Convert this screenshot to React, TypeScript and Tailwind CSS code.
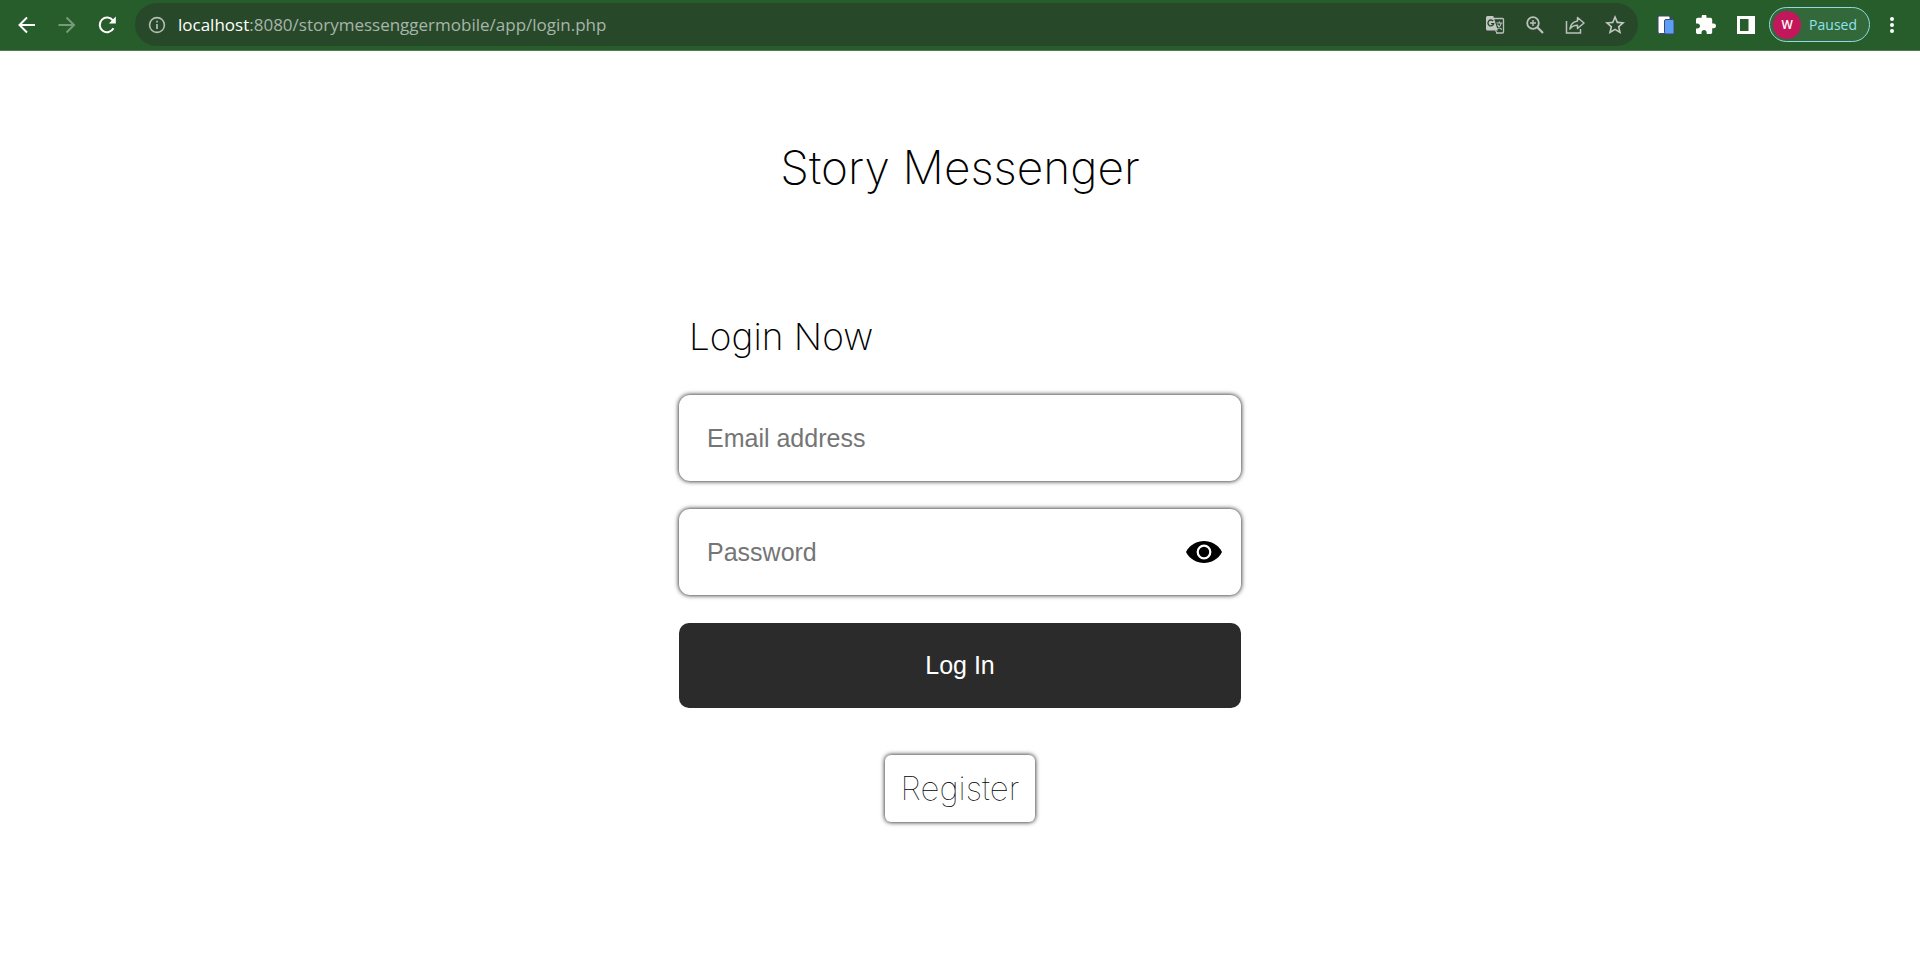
import { useState, type ReactNode } from 'react';

type IconButtonProps = { label: string; className?: string; children: ReactNode };

function IconButton({ label, className = '', children }: IconButtonProps) {
  return (
    <button type="button" aria-label={label} className={`flex size-10 shrink-0 items-center justify-center ${className}`}>
      {children}
    </button>
  );
}

function BrowserBar() {
  return (
    <header className="flex items-center border-b border-[#4d7d50] bg-[#275d2b] pt-[3px] pb-1 pr-2 pl-[7px] font-['Open_Sans',sans-serif]">
      <nav aria-label="History" className="flex">
        <IconButton label="Back">
          <svg width="20" height="20" viewBox="0 0 20 20" fill="none" stroke="#fff" strokeWidth="2">
            <path d="M18 10H3M10 2.500 2.500 10l7.500 7.500" />
          </svg>
        </IconButton>
        <IconButton label="Forward">
          <svg width="20" height="20" viewBox="0 0 20 20" fill="none" stroke="#769b78" strokeWidth="2">
            <path d="M1.500 10h15.500M9.500 2.500 17 10l-7.500 7.500" />
          </svg>
        </IconButton>
        <IconButton label="Reload">
          <svg width="20" height="20" viewBox="0 0 20 20" fill="none">
            <path d="M16.500 13.300A7.300 7.300 0 1 1 16 5.600" stroke="#fff" strokeWidth="2" />
            <path d="M18.800 1.500v6.900h-6.900z" fill="#fff" />
          </svg>
        </IconButton>
      </nav>
      <div className="ml-2 flex h-[43px] min-w-0 flex-1 items-center rounded-full bg-[#27492a] pl-[13px] pr-[3px]">
        <svg className="shrink-0" width="18" height="18" viewBox="0 0 18 18" fill="none" stroke="#b5bcb5">
          <circle cx="9" cy="9" r="7.400" strokeWidth="1.600" />
          <path d="M9 8v5M9 4.800v1.700" strokeWidth="1.700" />
        </svg>
        <p className="ml-3 min-w-0 flex-1 truncate text-[17px] leading-6 text-[#a8b5a9]">
          <span className="text-white">localhost</span>:8080/storymessenggermobile/app/login.php
        </p>
        <IconButton label="Translate this page">
          <svg width="20" height="20" viewBox="0 0 20 20">
            <path d="M9 3.500h8.500a1 1 0 0 1 1 1V17a1 1 0 0 1-1 1H11" fill="none" stroke="#bdc1bd" strokeWidth="1.300" />
            <path d="M2.500 1h5.800l4.500 14.500H2.500A1.500 1.500 0 0 1 1 14V2.500A1.500 1.500 0 0 1 2.500 1z" fill="#c3c7c3" />
            <path d="M8.200 6.200A2.900 2.900 0 1 0 8.700 8.600H6" fill="none" stroke="#27492a" strokeWidth="1.400" />
            <path d="M11.500 8h6M14.300 6.500V8M16.300 8c-.5 2.500-2 4.500-4 6M12.500 9.500c.8 2 2.300 3.700 4.300 5M10.500 15.500 12 18" fill="none" stroke="#bdc1bd" strokeWidth="1.200" />
          </svg>
        </IconButton>
        <IconButton label="Zoom">
          <svg width="20" height="20" viewBox="0 0 20 20" fill="none" stroke="#bdc1bd">
            <circle cx="8" cy="8" r="5.800" strokeWidth="1.800" />
            <path d="M8 5v6M5 8h6" strokeWidth="1.400" />
            <path d="m12.300 12.300 5.700 5.700" strokeWidth="2.200" />
          </svg>
        </IconButton>
        <IconButton label="Share">
          <svg width="20" height="20" viewBox="0 0 20 20" fill="none" stroke="#bdc1bd" strokeWidth="1.500">
            <path d="M1.500 6v12h14v-4" />
            <path d="M12.500 2.500 19 8l-6.500 5.500V10.300c-3.500 0-5.800 1.200-7.700 3.700.7-4.200 3.200-7.400 7.700-8z" strokeLinejoin="round" />
          </svg>
        </IconButton>
        <IconButton label="Bookmark this page">
          <svg width="20" height="20" viewBox="2 2 20 20" fill="#c3c7c3">
            <path d="m22 9.240-7.190-.62L12 2 9.190 8.630 2 9.240l5.460 4.730L5.820 21 12 17.270 18.180 21l-1.630-7.030L22 9.240zM12 15.400l-3.760 2.270 1-4.280-3.320-2.880 4.380-.38L12 6.100l1.710 4.040 4.380.38-3.320 2.880 1 4.280L12 15.400z" />
          </svg>
        </IconButton>
      </div>
      <div className="ml-2 flex items-center">
        <IconButton label="Device preview">
          <svg width="18" height="20" viewBox="0 0 18 20" stroke="#3d4676">
            <rect x="1" y="1" width="12" height="17.500" rx="1.500" fill="#fff" />
            <rect x="7.500" y="4.500" width="9.500" height="14.500" rx="1.500" fill="#5c9ff5" />
          </svg>
        </IconButton>
        <IconButton label="Extensions">
          <svg width="20" height="20" viewBox="2 2 21 21" fill="#fff">
            <path d="M20.500 11H19V7c0-1.100-.9-2-2-2h-4V3.500a2.500 2.500 0 0 0-5 0V5H4c-1.100 0-1.990.9-1.990 2v3.800H3.500c1.490 0 2.700 1.210 2.700 2.700s-1.210 2.700-2.700 2.700H2V20c0 1.100.9 2 2 2h3.800v-1.500c0-1.490 1.210-2.700 2.700-2.700s2.700 1.210 2.700 2.700V22H17c1.100 0 2-.9 2-2v-4h1.500a2.500 2.500 0 0 0 0-5z" />
          </svg>
        </IconButton>
        <IconButton label="Side panel">
          <svg width="18" height="18" viewBox="0 0 18 18">
            <path d="M0 0h18v18H0zM3 3v12h8.500V3z" fill="#fff" fillRule="evenodd" />
          </svg>
        </IconButton>
        <button type="button" className="ml-[3px] flex h-[35px] items-center gap-2 rounded-full border border-[#8fdbe0] bg-[#33683b] pr-3 pl-[3px] text-[14px] leading-5 text-[#8fe3ea]">
          <span className="flex size-7 items-center justify-center rounded-full bg-[#c2185b] text-xs font-semibold text-white">W</span>
          Paused
        </button>
        <IconButton label="Browser menu" className="ml-[2px]">
          <svg width="4" height="18" viewBox="0 0 4 18" fill="#fff">
            <circle cx="2" cy="3" r="2" />
            <circle cx="2" cy="9" r="2" />
            <circle cx="2" cy="15" r="2" />
          </svg>
        </IconButton>
      </div>
    </header>
  );
}

const fieldClass =
  'h-[86px] w-full rounded-[11px] bg-white pl-7 text-[25px] text-black placeholder:text-[#757575] outline-none shadow-[0_0_5px_#000]';

function LoginForm() {
  const [visible, setVisible] = useState(false);
  return (
    <form className="flex w-full max-w-[562px] flex-col font-['Liberation_Sans',Arial,sans-serif]" onSubmit={(e) => e.preventDefault()}>
      <h2 className="mb-[34px] pl-[10px] font-['Inter',sans-serif] text-[37px] leading-[48px] font-extralight text-black">Login Now</h2>
      <input aria-label="Email address" type="email" placeholder="Email address" className={fieldClass} />
      <div className="relative mt-7">
        <input aria-label="Password" type={visible ? 'text' : 'password'} placeholder="Password" className={fieldClass} />
        <button type="button" aria-label="Show password" onClick={() => setVisible(!visible)} className="absolute inset-y-0 right-[19px] flex items-center">
          <svg width="36" height="22" viewBox="0 0 36 22">
            <path d="M0 11C4 3.500 11 0 18 0s14 3.500 18 11c-4 7.500-11 11-18 11S4 18.500 0 11z" />
            <circle cx="18" cy="11" r="6.300" fill="none" stroke="#fff" strokeWidth="2.200" />
          </svg>
        </button>
      </div>
      <button type="submit" className="mt-7 h-[85px] rounded-[10px] bg-[#2b2b2b] text-[25px] text-white">Log In</button>
      <a href="#register" className="mt-[47px] flex h-[67px] items-center self-center rounded-md bg-white px-4 font-['Inter',sans-serif] text-[33px] font-thin text-black shadow-[0_0_5px_#000]">
        Register
      </a>
    </form>
  );
}

export default function App() {
  return (
    <div className="min-h-screen bg-white">
      <BrowserBar />
      <main className="flex flex-col items-center px-4 pb-12">
        <h1 className="mt-[84px] mb-[114px] font-['Inter',sans-serif] text-[46px] leading-[64px] font-extralight text-black">Story Messenger</h1>
        <LoginForm />
      </main>
    </div>
  );
}
